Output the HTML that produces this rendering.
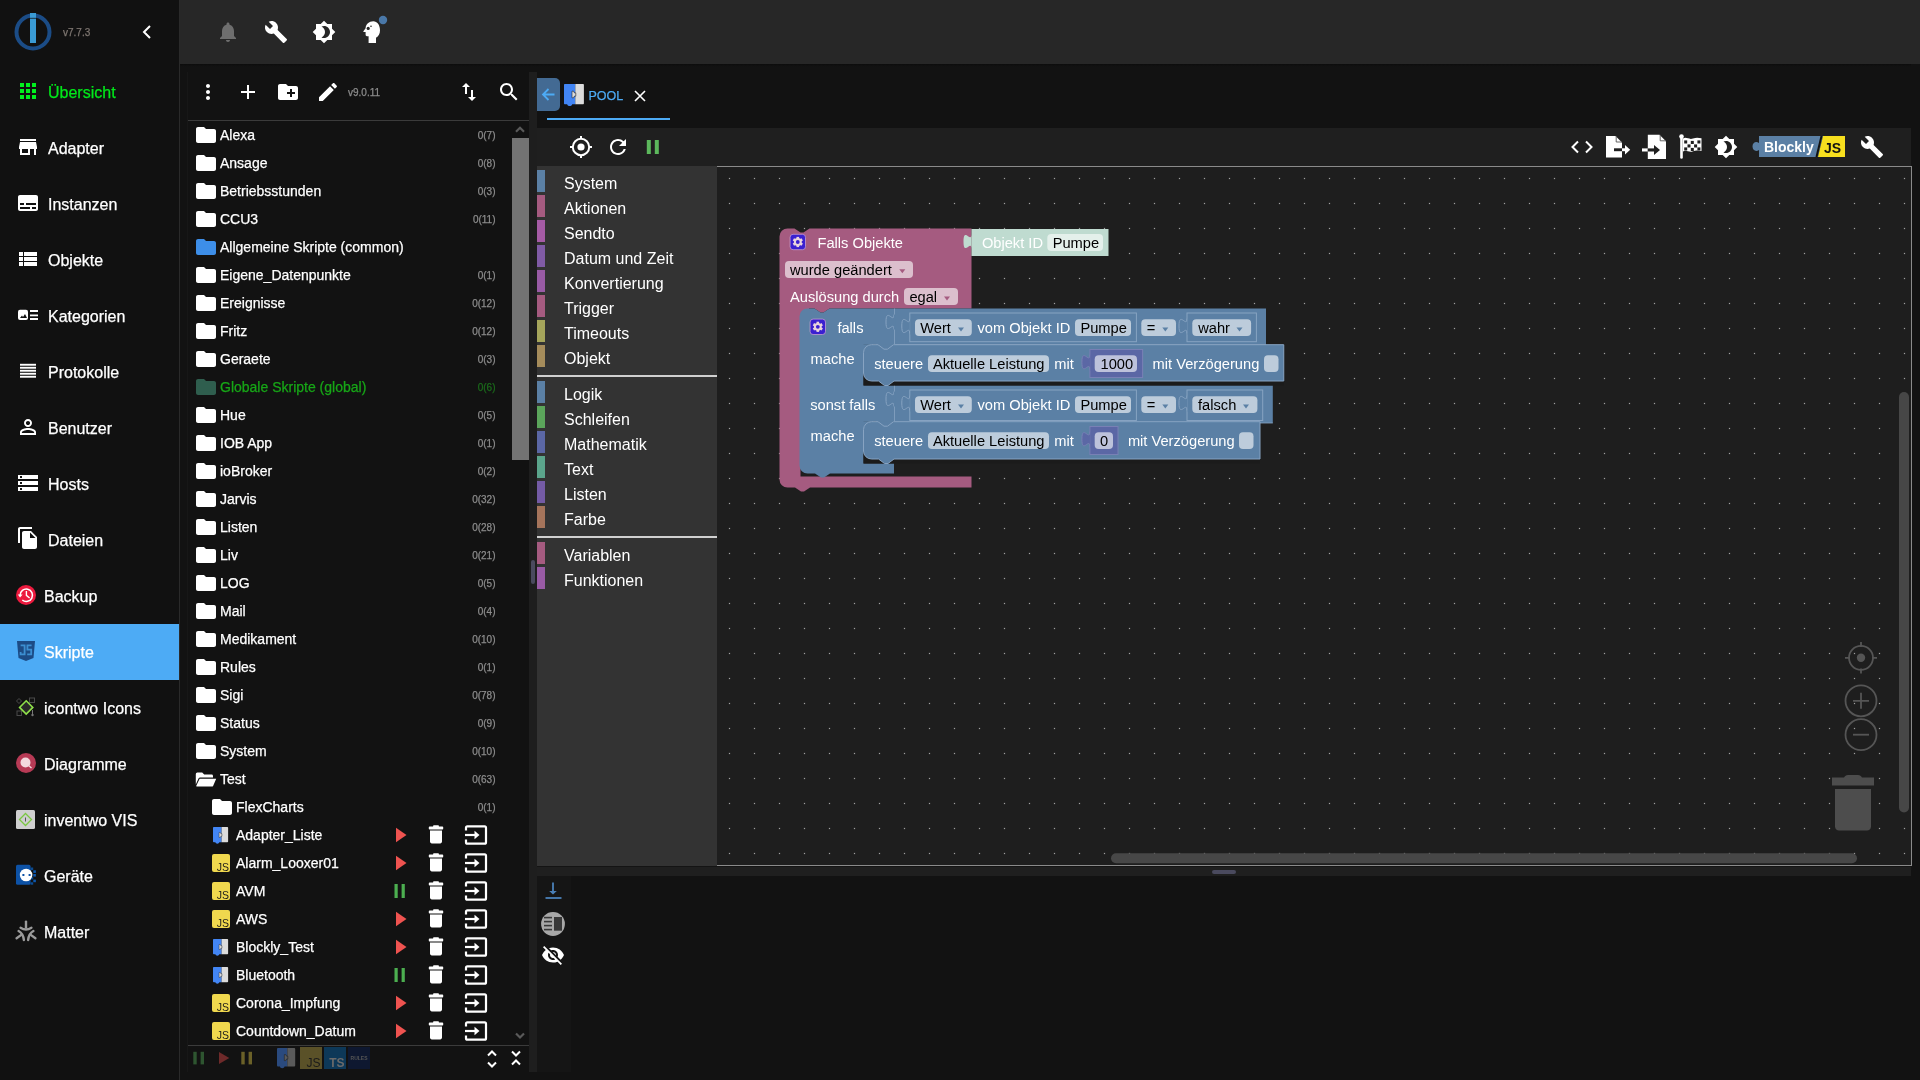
<!DOCTYPE html><html><head><meta charset="utf-8"><style>
html,body{margin:0;padding:0;width:1920px;height:1080px;overflow:hidden;background:#121212;font-family:"Liberation Sans",sans-serif;}
.t{position:absolute;white-space:nowrap;-webkit-text-stroke:0.25px currentColor;}
.r{position:absolute;display:block;}
#wrap{position:absolute;left:0;top:0;width:1920px;height:1080px;will-change:transform;}
</style></head><body>
<div id="wrap"><div class="r" style="left:0px;top:0px;width:180px;height:1080px;background:#111111;"></div>
<div class="r" style="left:179px;top:0px;width:1px;height:1080px;background:#2a2a2a;"></div>
<svg class="r" style="left:12px;top:11px;" width="42" height="42" viewBox="0 0 42 42"><circle cx="21" cy="21" r="16.5" fill="none" stroke="#1b4c86" stroke-width="4"/><rect x="18" y="2" width="6" height="4.8" fill="#3a9bd5"/><rect x="18" y="7.6" width="6" height="24.4" fill="#3a9bd5"/><rect x="18" y="32" width="6" height="0" fill="#3a9bd5"/></svg>
<div class="t" style="left:63px;top:27.64px;font-size:10px;line-height:10px;color:#7d7570;">v7.7.3</div>
<svg class="r" style="left:139px;top:24px;" width="16" height="16" viewBox="0 0 16 16"><path d="M11 2 L5 8 L11 14" fill="none" stroke="#fff" stroke-width="2"/></svg>
<div class="t" style="left:48px;top:84.76px;font-size:16px;line-height:16px;color:#00e81a;">Übersicht</div>
<div class="t" style="left:48px;top:140.76px;font-size:16px;line-height:16px;color:#fff;">Adapter</div>
<div class="t" style="left:48px;top:196.76px;font-size:16px;line-height:16px;color:#fff;">Instanzen</div>
<div class="t" style="left:48px;top:252.76px;font-size:16px;line-height:16px;color:#fff;">Objekte</div>
<div class="t" style="left:48px;top:308.76px;font-size:16px;line-height:16px;color:#fff;">Kategorien</div>
<div class="t" style="left:48px;top:364.76px;font-size:16px;line-height:16px;color:#fff;">Protokolle</div>
<div class="t" style="left:48px;top:420.76px;font-size:16px;line-height:16px;color:#fff;">Benutzer</div>
<div class="t" style="left:48px;top:476.76px;font-size:16px;line-height:16px;color:#fff;">Hosts</div>
<div class="t" style="left:48px;top:532.76px;font-size:16px;line-height:16px;color:#fff;">Dateien</div>
<div class="t" style="left:44px;top:588.76px;font-size:16px;line-height:16px;color:#fff;">Backup</div>
<div class="r" style="left:0px;top:624px;width:179px;height:56px;background:#4dabf5;"></div>
<div class="t" style="left:44px;top:644.76px;font-size:16px;line-height:16px;color:#fff;">Skripte</div>
<div class="t" style="left:44px;top:700.76px;font-size:16px;line-height:16px;color:#fff;">icontwo Icons</div>
<div class="t" style="left:44px;top:756.76px;font-size:16px;line-height:16px;color:#fff;">Diagramme</div>
<div class="t" style="left:44px;top:812.76px;font-size:16px;line-height:16px;color:#fff;">inventwo VIS</div>
<div class="t" style="left:44px;top:868.76px;font-size:16px;line-height:16px;color:#fff;">Geräte</div>
<div class="t" style="left:44px;top:924.76px;font-size:16px;line-height:16px;color:#fff;">Matter</div>
<svg class="r" style="left:16px;top:79px;" width="24" height="24" viewBox="0 0 24 24"><path fill="#00f01e" d="M4 8h4V4H4v4zm6 12h4v-4h-4v4zm-6 0h4v-4H4v4zm0-6h4v-4H4v4zm6 0h4v-4h-4v4zm6-10v4h4V4h-4zm-6 4h4V4h-4v4zm6 6h4v-4h-4v4zm0 6h4v-4h-4v4z"/></svg>
<svg class="r" style="left:16px;top:135px;" width="24" height="24" viewBox="0 0 24 24"><path fill="#fff" d="M20 4H4v2h16V4zm1 10v-2l-1-5H4l-1 5v2h1v6h10v-6h4v6h2v-6h1zm-9 4H6v-4h6v4z"/></svg>
<svg class="r" style="left:16px;top:191px;" width="24" height="24" viewBox="0 0 24 24"><path fill="#fff" d="M20 4H4c-1.1 0-2 .9-2 2v12c0 1.1.9 2 2 2h16c1.1 0 2-.9 2-2V6c0-1.1-.9-2-2-2zM4 12h4v2H4v-2zm10 6H4v-2h10v2zm6 0h-4v-2h4v2zm0-4H10v-2h10v2z"/></svg>
<svg class="r" style="left:16px;top:247px;" width="24" height="24" viewBox="0 0 24 24"><path fill="#fff" d="M3 14h4v-4H3v4zm0 5h4v-4H3v4zM3 9h4V5H3v4zm5 5h13v-4H8v4zm0 5h13v-4H8v4zM8 5v4h13V5H8z"/></svg>
<svg class="r" style="left:16px;top:303px;" width="24" height="24" viewBox="0 0 24 24"><rect x="2" y="6.8" width="10" height="10.2" rx="2" fill="#fff"/><path d="M4 15 L6 12.5 L7 14 L9 11 L11 15 Z" fill="#111"/><rect x="14" y="7" width="8" height="2" fill="#fff"/><rect x="14" y="11.5" width="8" height="1.8" fill="#fff"/><rect x="14" y="15" width="8" height="2" fill="#fff"/></svg>
<svg class="r" style="left:16px;top:359px;" width="24" height="24" viewBox="0 0 24 24"><rect x="4" y="4.8" width="16" height="1.9" fill="#fff"/><rect x="4" y="7.8" width="16" height="1.9" fill="#fff"/><rect x="4" y="10.8" width="16" height="1.9" fill="#fff"/><rect x="4" y="13.8" width="16" height="1.9" fill="#fff"/><rect x="4" y="16.8" width="16" height="1.9" fill="#fff"/></svg>
<svg class="r" style="left:16px;top:415px;" width="24" height="24" viewBox="0 0 24 24"><path fill="#fff" d="M12 5.9c1.16 0 2.1.94 2.1 2.1s-.94 2.1-2.1 2.1S9.9 9.16 9.9 8s.94-2.1 2.1-2.1m0 9c2.97 0 6.1 1.46 6.1 2.1v1.1H5.9V17c0-.64 3.13-2.1 6.1-2.1M12 4C9.79 4 8 5.79 8 8s1.79 4 4 4 4-1.79 4-4-1.79-4-4-4zm0 9c-2.67 0-8 1.34-8 4v3h16v-3c0-2.66-5.33-4-8-4z"/></svg>
<svg class="r" style="left:16px;top:471px;" width="24" height="24" viewBox="0 0 24 24"><path fill="#fff" d="M2 20h20v-4H2v4zm2-3h2v2H4v-2zM2 4v4h20V4H2zm4 3H4V5h2v2zm-4 7h20v-4H2v4zm2-3h2v2H4v-2z"/></svg>
<svg class="r" style="left:16px;top:526px;" width="24" height="24" viewBox="0 0 24 24"><path fill="#fff" d="M16 1H4c-1.1 0-2 .9-2 2v14h2V3h12V1zm-1 4l6 6v10c0 1.1-.9 2-2 2H7.99C6.89 23 6 22.1 6 21l.01-14c0-1.1.89-2 1.99-2h7zm-1 7h5.5L14 6.5V12z"/></svg>
<svg class="r" style="left:16px;top:585px;" width="20" height="20" viewBox="0 0 20 20"><circle cx="10" cy="10" r="10" fill="#ec1a3e"/><path d="M4.1 10.3 A6.2 6.2 0 1 1 6.3 15" fill="none" stroke="#fff" stroke-width="1.5"/><path d="M1.8 9.6 L4.1 12.4 L6.6 9.6 Z" fill="#fff"/><path d="M10.4 6 V10.4 L13.6 13" fill="none" stroke="#fff" stroke-width="1.4"/></svg>
<svg class="r" style="left:17px;top:641px;" width="18" height="20" viewBox="0 0 18 20"><path d="M0 0 H18 L16.5 17 L9 20 L1.5 17 Z" fill="#1c4b85"/><path d="M3.6 4.3 H7.6 V13.4 H3.6 V11" fill="none" stroke="#3c8fd2" stroke-width="1.8"/><path d="M14.6 4.3 H10.4 V8.6 H14.2 V13.4 H10.2" fill="none" stroke="#3c8fd2" stroke-width="1.8"/></svg>
<svg class="r" style="left:16px;top:697px;" width="20" height="20" viewBox="0 0 20 20"><g fill="none" stroke="#4a4a4a" stroke-width="1"><path d="M3 1.5 L5.5 4 L3 6.5 L0.5 4 Z"/><rect x="13.5" y="1" width="5" height="4.5"/><rect x="1" y="14" width="4.5" height="4.5"/></g><path d="M16.5 13 V18" stroke="#777" stroke-width="1"/><circle cx="16.5" cy="18" r="1.2" fill="#777"/><path d="M10.2 3.8 L16.8 10.4 L10.2 17 L3.6 10.4 Z" fill="#3a3a3a" fill-opacity="0.6" stroke="#8fe04a" stroke-width="1.6"/></svg>
<svg class="r" style="left:16px;top:753px;" width="20" height="20" viewBox="0 0 20 20"><circle cx="10" cy="10" r="10" fill="#b73a55"/><circle cx="9.5" cy="9.5" r="5" fill="#f3d9de"/><path d="M12 12 L15.5 15" stroke="#f3d9de" stroke-width="1.4"/></svg>
<svg class="r" style="left:16px;top:810px;" width="19" height="19" viewBox="0 0 19 19"><rect x="0" y="0" width="19" height="19" rx="1.5" fill="#cfcfcf"/><path d="M9.5 3.5 L15.5 9.5 L9.5 15.5 L3.5 9.5 Z" fill="none" stroke="#7bc742" stroke-width="1.3"/><rect x="9" y="7.5" width="1" height="4" fill="#555"/></svg>
<svg class="r" style="left:16px;top:864px;" width="21" height="22" viewBox="0 0 21 22"><rect x="0" y="0.8" width="14.6" height="20" rx="1.6" fill="#0d52a6"/><rect x="14.6" y="3.5" width="2.6" height="2.6" fill="#0b4a90"/><rect x="17.3" y="6.3" width="2.6" height="2.6" fill="#0c58b0"/><rect x="17.3" y="10" width="2.6" height="2.6" fill="#0c58b0"/><rect x="14.6" y="12.8" width="2.6" height="2.6" fill="#0b4a90"/><rect x="17.3" y="15.6" width="2.6" height="2.6" fill="#0c58b0"/><rect x="14.6" y="18.3" width="2.6" height="2.4" fill="#0b4a90"/><circle cx="10.1" cy="11" r="6.3" fill="#fff"/><rect x="6.4" y="10" width="2" height="2" fill="#0d52a6"/><rect x="12.6" y="10" width="2" height="2" fill="#0d52a6"/></svg>
<svg class="r" style="left:14px;top:919px;" width="24" height="24" viewBox="0 0 24 24"><g stroke="#9a9a9a" stroke-width="2.4" fill="none" stroke-linecap="round"><path d="M12 2.6 V8.4"/><path d="M6.6 8.7 Q12 12.2 17.4 8.7"/><path d="M4.6 12 Q9.2 14.5 9.9 21"/><path d="M2.6 19.2 L7.6 15.6"/><path d="M19.4 12 Q14.8 14.5 14.1 21"/><path d="M21.4 19.2 L16.4 15.6"/></g></svg>
<div class="r" style="left:180px;top:0px;width:1740px;height:64px;background:#272727;"></div>
<div class="r" style="left:180px;top:64px;width:1740px;height:3px;background:linear-gradient(#0c0c0c,#111 70%,#121212);"></div>
<svg class="r" style="left:216px;top:20px;" width="24" height="24" viewBox="0 0 24 24"><path fill="#6e6e6e" d="M12 22c1.1 0 2-.9 2-2h-4c0 1.1.89 2 2 2zm6-6v-5c0-3.07-1.64-5.64-4.5-6.32V4c0-.83-.67-1.5-1.5-1.5s-1.5.67-1.5 1.5v.68C7.63 5.36 6 7.92 6 11v5l-2 2v1h16v-1l-2-2z"/></svg>
<svg class="r" style="left:264px;top:20px;" width="24" height="24" viewBox="0 0 24 24"><path fill="#fff" d="M22.7 19l-9.1-9.1c.9-2.3.4-5-1.5-6.9-2-2-5-2.4-7.4-1.3L9 6 6 9 1.6 4.7C.4 7.1.9 10.1 2.9 12.1c1.9 1.9 4.6 2.4 6.9 1.5l9.1 9.1c.4.4 1 .4 1.4 0l2.3-2.3c.5-.4.5-1.1.1-1.4z"/></svg>
<svg class="r" style="left:312px;top:20px;" width="24" height="24" viewBox="0 0 24 24"><path fill="#fff" d="M20 8.69V4h-4.69L12 .69 8.69 4H4v4.69L.69 12 4 15.31V20h4.69L12 23.31 15.31 20H20v-4.69L23.31 12 20 8.69zM12 18c-.89 0-1.74-.2-2.5-.55C11.56 16.5 13 14.42 13 12s-1.44-4.5-3.5-5.45C10.26 6.2 11.11 6 12 6c3.31 0 6 2.69 6 6s-2.69 6-6 6z"/></svg>
<svg class="r" style="left:360px;top:20px;" width="24" height="24" viewBox="0 0 24 24"><path d="M13.3 1.2 C9 1.2 5.8 4.2 5.6 8.2 L3.4 11.2 C3.2 11.6 3.4 12 3.9 12 H5.6 V14.8 C5.6 15.6 6.2 16.2 7 16.2 H8.6 V23 H16 V17.8 C18.6 16.5 20 13.6 20 10.2 C20 5 17.2 1.2 13.3 1.2 Z" fill="#fff"/><circle cx="8.2" cy="8.4" r="1.6" fill="#272727"/><circle cx="11" cy="6.3" r="0.8" fill="#272727"/></svg>
<svg class="r" style="left:378px;top:15px;" width="10" height="10" viewBox="0 0 10 10"><circle cx="5" cy="5" r="4.2" fill="#4a78a8"/></svg>
<div class="r" style="left:187px;top:72px;width:1px;height:1000px;background:#171717;"></div>
<svg class="r" style="left:196px;top:80px;" width="24" height="24" viewBox="0 0 24 24"><path fill="#fff" d="M12 8c1.1 0 2-.9 2-2s-.9-2-2-2-2 .9-2 2 .9 2 2 2zm0 2c-1.1 0-2 .9-2 2s.9 2 2 2 2-.9 2-2-.9-2-2-2zm0 6c-1.1 0-2 .9-2 2s.9 2 2 2 2-.9 2-2-.9-2-2-2z"/></svg>
<svg class="r" style="left:236px;top:80px;" width="24" height="24" viewBox="0 0 24 24"><path fill="#fff" d="M19 13h-6v6h-2v-6H5v-2h6V5h2v6h6v2z"/></svg>
<svg class="r" style="left:276px;top:80px;" width="24" height="24" viewBox="0 0 24 24"><path fill="#fff" d="M20 6h-8l-2-2H4c-1.11 0-1.99.89-1.99 2L2 18c0 1.11.89 2 2 2h16c1.11 0 2-.89 2-2V8c0-1.11-.89-2-2-2zm-1 8h-3v3h-2v-3h-3v-2h3V9h2v3h3v2z"/></svg>
<svg class="r" style="left:316px;top:80px;" width="24" height="24" viewBox="0 0 24 24"><path fill="#fff" d="M3 17.25V21h3.75L17.81 9.94l-3.75-3.75L3 17.25zM20.71 7.04c.39-.39.39-1.02 0-1.41l-2.34-2.34c-.39-.39-1.02-.39-1.41 0l-1.83 1.83 3.75 3.75 1.83-1.83z"/></svg>
<div class="t" style="left:348px;top:87.63px;font-size:10px;line-height:10px;color:#8c8c8c;">v9.0.11</div>
<svg class="r" style="left:457px;top:80px;" width="24" height="24" viewBox="0 0 24 24"><path fill="#fff" d="M16 17.01V10h-2v7.01h-3L15 21l4-3.99h-3zM9 3L5 6.99h3V14h2V6.99h3L9 3z"/></svg>
<svg class="r" style="left:497px;top:80px;" width="24" height="24" viewBox="0 0 24 24"><path fill="#fff" d="M15.5 14h-.79l-.28-.27C15.41 12.59 16 11.11 16 9.5 16 5.91 13.09 3 9.5 3S3 5.91 3 9.5 5.91 16 9.5 16c1.61 0 3.09-.59 4.23-1.57l.27.28v.79l5 4.99L20.49 19l-4.99-5zm-6 0C7.01 14 5 11.99 5 9.5S7.01 5 9.5 5 14 7.01 14 9.5 11.99 14 9.5 14z"/></svg>
<div class="r" style="left:188px;top:120px;width:341px;height:1px;background:#3b3b3b;"></div>
<svg class="r" style="left:194px;top:123px;" width="24" height="24" viewBox="0 0 24 24"><path fill="#fff" d="M10 4H4c-1.1 0-1.99.9-1.99 2L2 18c0 1.1.9 2 2 2h16c1.1 0 2-.9 2-2V8c0-1.1-.9-2-2-2h-8l-2-2z"/></svg>
<div class="t" style="left:220px;top:128.25px;font-size:14px;line-height:14px;color:#fff;">Alexa</div>
<div class="t" style="right:1424.5px;top:130.63px;font-size:10px;line-height:10px;color:#8c8c8c;">0(7)</div>
<svg class="r" style="left:194px;top:151px;" width="24" height="24" viewBox="0 0 24 24"><path fill="#fff" d="M10 4H4c-1.1 0-1.99.9-1.99 2L2 18c0 1.1.9 2 2 2h16c1.1 0 2-.9 2-2V8c0-1.1-.9-2-2-2h-8l-2-2z"/></svg>
<div class="t" style="left:220px;top:156.25px;font-size:14px;line-height:14px;color:#fff;">Ansage</div>
<div class="t" style="right:1424.5px;top:158.63px;font-size:10px;line-height:10px;color:#8c8c8c;">0(8)</div>
<svg class="r" style="left:194px;top:179px;" width="24" height="24" viewBox="0 0 24 24"><path fill="#fff" d="M10 4H4c-1.1 0-1.99.9-1.99 2L2 18c0 1.1.9 2 2 2h16c1.1 0 2-.9 2-2V8c0-1.1-.9-2-2-2h-8l-2-2z"/></svg>
<div class="t" style="left:220px;top:184.25px;font-size:14px;line-height:14px;color:#fff;">Betriebsstunden</div>
<div class="t" style="right:1424.5px;top:186.63px;font-size:10px;line-height:10px;color:#8c8c8c;">0(3)</div>
<svg class="r" style="left:194px;top:207px;" width="24" height="24" viewBox="0 0 24 24"><path fill="#fff" d="M10 4H4c-1.1 0-1.99.9-1.99 2L2 18c0 1.1.9 2 2 2h16c1.1 0 2-.9 2-2V8c0-1.1-.9-2-2-2h-8l-2-2z"/></svg>
<div class="t" style="left:220px;top:212.25px;font-size:14px;line-height:14px;color:#fff;">CCU3</div>
<div class="t" style="right:1424.5px;top:214.63px;font-size:10px;line-height:10px;color:#8c8c8c;">0(11)</div>
<svg class="r" style="left:194px;top:235px;" width="24" height="24" viewBox="0 0 24 24"><path fill="#3d8ee8" d="M10 4H4c-1.1 0-1.99.9-1.99 2L2 18c0 1.1.9 2 2 2h16c1.1 0 2-.9 2-2V8c0-1.1-.9-2-2-2h-8l-2-2z"/></svg>
<div class="t" style="left:220px;top:240.25px;font-size:14px;line-height:14px;color:#fff;">Allgemeine Skripte (common)</div>
<svg class="r" style="left:194px;top:263px;" width="24" height="24" viewBox="0 0 24 24"><path fill="#fff" d="M10 4H4c-1.1 0-1.99.9-1.99 2L2 18c0 1.1.9 2 2 2h16c1.1 0 2-.9 2-2V8c0-1.1-.9-2-2-2h-8l-2-2z"/></svg>
<div class="t" style="left:220px;top:268.25px;font-size:14px;line-height:14px;color:#fff;">Eigene_Datenpunkte</div>
<div class="t" style="right:1424.5px;top:270.64px;font-size:10px;line-height:10px;color:#8c8c8c;">0(1)</div>
<svg class="r" style="left:194px;top:291px;" width="24" height="24" viewBox="0 0 24 24"><path fill="#fff" d="M10 4H4c-1.1 0-1.99.9-1.99 2L2 18c0 1.1.9 2 2 2h16c1.1 0 2-.9 2-2V8c0-1.1-.9-2-2-2h-8l-2-2z"/></svg>
<div class="t" style="left:220px;top:296.25px;font-size:14px;line-height:14px;color:#fff;">Ereignisse</div>
<div class="t" style="right:1424.5px;top:298.64px;font-size:10px;line-height:10px;color:#8c8c8c;">0(12)</div>
<svg class="r" style="left:194px;top:319px;" width="24" height="24" viewBox="0 0 24 24"><path fill="#fff" d="M10 4H4c-1.1 0-1.99.9-1.99 2L2 18c0 1.1.9 2 2 2h16c1.1 0 2-.9 2-2V8c0-1.1-.9-2-2-2h-8l-2-2z"/></svg>
<div class="t" style="left:220px;top:324.25px;font-size:14px;line-height:14px;color:#fff;">Fritz</div>
<div class="t" style="right:1424.5px;top:326.64px;font-size:10px;line-height:10px;color:#8c8c8c;">0(12)</div>
<svg class="r" style="left:194px;top:347px;" width="24" height="24" viewBox="0 0 24 24"><path fill="#fff" d="M10 4H4c-1.1 0-1.99.9-1.99 2L2 18c0 1.1.9 2 2 2h16c1.1 0 2-.9 2-2V8c0-1.1-.9-2-2-2h-8l-2-2z"/></svg>
<div class="t" style="left:220px;top:352.25px;font-size:14px;line-height:14px;color:#fff;">Geraete</div>
<div class="t" style="right:1424.5px;top:354.64px;font-size:10px;line-height:10px;color:#8c8c8c;">0(3)</div>
<svg class="r" style="left:194px;top:375px;" width="24" height="24" viewBox="0 0 24 24"><path fill="#2f5e4e" d="M10 4H4c-1.1 0-1.99.9-1.99 2L2 18c0 1.1.9 2 2 2h16c1.1 0 2-.9 2-2V8c0-1.1-.9-2-2-2h-8l-2-2z"/></svg>
<div class="t" style="left:220px;top:380.25px;font-size:14px;line-height:14px;color:#17a617;">Globale Skripte (global)</div>
<div class="t" style="right:1424.5px;top:382.64px;font-size:10px;line-height:10px;color:#1b6a1b;">0(6)</div>
<svg class="r" style="left:194px;top:403px;" width="24" height="24" viewBox="0 0 24 24"><path fill="#fff" d="M10 4H4c-1.1 0-1.99.9-1.99 2L2 18c0 1.1.9 2 2 2h16c1.1 0 2-.9 2-2V8c0-1.1-.9-2-2-2h-8l-2-2z"/></svg>
<div class="t" style="left:220px;top:408.25px;font-size:14px;line-height:14px;color:#fff;">Hue</div>
<div class="t" style="right:1424.5px;top:410.64px;font-size:10px;line-height:10px;color:#8c8c8c;">0(5)</div>
<svg class="r" style="left:194px;top:431px;" width="24" height="24" viewBox="0 0 24 24"><path fill="#fff" d="M10 4H4c-1.1 0-1.99.9-1.99 2L2 18c0 1.1.9 2 2 2h16c1.1 0 2-.9 2-2V8c0-1.1-.9-2-2-2h-8l-2-2z"/></svg>
<div class="t" style="left:220px;top:436.25px;font-size:14px;line-height:14px;color:#fff;">IOB App</div>
<div class="t" style="right:1424.5px;top:438.64px;font-size:10px;line-height:10px;color:#8c8c8c;">0(1)</div>
<svg class="r" style="left:194px;top:459px;" width="24" height="24" viewBox="0 0 24 24"><path fill="#fff" d="M10 4H4c-1.1 0-1.99.9-1.99 2L2 18c0 1.1.9 2 2 2h16c1.1 0 2-.9 2-2V8c0-1.1-.9-2-2-2h-8l-2-2z"/></svg>
<div class="t" style="left:220px;top:464.25px;font-size:14px;line-height:14px;color:#fff;">ioBroker</div>
<div class="t" style="right:1424.5px;top:466.64px;font-size:10px;line-height:10px;color:#8c8c8c;">0(2)</div>
<svg class="r" style="left:194px;top:487px;" width="24" height="24" viewBox="0 0 24 24"><path fill="#fff" d="M10 4H4c-1.1 0-1.99.9-1.99 2L2 18c0 1.1.9 2 2 2h16c1.1 0 2-.9 2-2V8c0-1.1-.9-2-2-2h-8l-2-2z"/></svg>
<div class="t" style="left:220px;top:492.25px;font-size:14px;line-height:14px;color:#fff;">Jarvis</div>
<div class="t" style="right:1424.5px;top:494.64px;font-size:10px;line-height:10px;color:#8c8c8c;">0(32)</div>
<svg class="r" style="left:194px;top:515px;" width="24" height="24" viewBox="0 0 24 24"><path fill="#fff" d="M10 4H4c-1.1 0-1.99.9-1.99 2L2 18c0 1.1.9 2 2 2h16c1.1 0 2-.9 2-2V8c0-1.1-.9-2-2-2h-8l-2-2z"/></svg>
<div class="t" style="left:220px;top:520.25px;font-size:14px;line-height:14px;color:#fff;">Listen</div>
<div class="t" style="right:1424.5px;top:522.63px;font-size:10px;line-height:10px;color:#8c8c8c;">0(28)</div>
<svg class="r" style="left:194px;top:543px;" width="24" height="24" viewBox="0 0 24 24"><path fill="#fff" d="M10 4H4c-1.1 0-1.99.9-1.99 2L2 18c0 1.1.9 2 2 2h16c1.1 0 2-.9 2-2V8c0-1.1-.9-2-2-2h-8l-2-2z"/></svg>
<div class="t" style="left:220px;top:548.25px;font-size:14px;line-height:14px;color:#fff;">Liv</div>
<div class="t" style="right:1424.5px;top:550.63px;font-size:10px;line-height:10px;color:#8c8c8c;">0(21)</div>
<svg class="r" style="left:194px;top:571px;" width="24" height="24" viewBox="0 0 24 24"><path fill="#fff" d="M10 4H4c-1.1 0-1.99.9-1.99 2L2 18c0 1.1.9 2 2 2h16c1.1 0 2-.9 2-2V8c0-1.1-.9-2-2-2h-8l-2-2z"/></svg>
<div class="t" style="left:220px;top:576.25px;font-size:14px;line-height:14px;color:#fff;">LOG</div>
<div class="t" style="right:1424.5px;top:578.63px;font-size:10px;line-height:10px;color:#8c8c8c;">0(5)</div>
<svg class="r" style="left:194px;top:599px;" width="24" height="24" viewBox="0 0 24 24"><path fill="#fff" d="M10 4H4c-1.1 0-1.99.9-1.99 2L2 18c0 1.1.9 2 2 2h16c1.1 0 2-.9 2-2V8c0-1.1-.9-2-2-2h-8l-2-2z"/></svg>
<div class="t" style="left:220px;top:604.25px;font-size:14px;line-height:14px;color:#fff;">Mail</div>
<div class="t" style="right:1424.5px;top:606.63px;font-size:10px;line-height:10px;color:#8c8c8c;">0(4)</div>
<svg class="r" style="left:194px;top:627px;" width="24" height="24" viewBox="0 0 24 24"><path fill="#fff" d="M10 4H4c-1.1 0-1.99.9-1.99 2L2 18c0 1.1.9 2 2 2h16c1.1 0 2-.9 2-2V8c0-1.1-.9-2-2-2h-8l-2-2z"/></svg>
<div class="t" style="left:220px;top:632.25px;font-size:14px;line-height:14px;color:#fff;">Medikament</div>
<div class="t" style="right:1424.5px;top:634.63px;font-size:10px;line-height:10px;color:#8c8c8c;">0(10)</div>
<svg class="r" style="left:194px;top:655px;" width="24" height="24" viewBox="0 0 24 24"><path fill="#fff" d="M10 4H4c-1.1 0-1.99.9-1.99 2L2 18c0 1.1.9 2 2 2h16c1.1 0 2-.9 2-2V8c0-1.1-.9-2-2-2h-8l-2-2z"/></svg>
<div class="t" style="left:220px;top:660.25px;font-size:14px;line-height:14px;color:#fff;">Rules</div>
<div class="t" style="right:1424.5px;top:662.63px;font-size:10px;line-height:10px;color:#8c8c8c;">0(1)</div>
<svg class="r" style="left:194px;top:683px;" width="24" height="24" viewBox="0 0 24 24"><path fill="#fff" d="M10 4H4c-1.1 0-1.99.9-1.99 2L2 18c0 1.1.9 2 2 2h16c1.1 0 2-.9 2-2V8c0-1.1-.9-2-2-2h-8l-2-2z"/></svg>
<div class="t" style="left:220px;top:688.25px;font-size:14px;line-height:14px;color:#fff;">Sigi</div>
<div class="t" style="right:1424.5px;top:690.63px;font-size:10px;line-height:10px;color:#8c8c8c;">0(78)</div>
<svg class="r" style="left:194px;top:711px;" width="24" height="24" viewBox="0 0 24 24"><path fill="#fff" d="M10 4H4c-1.1 0-1.99.9-1.99 2L2 18c0 1.1.9 2 2 2h16c1.1 0 2-.9 2-2V8c0-1.1-.9-2-2-2h-8l-2-2z"/></svg>
<div class="t" style="left:220px;top:716.25px;font-size:14px;line-height:14px;color:#fff;">Status</div>
<div class="t" style="right:1424.5px;top:718.63px;font-size:10px;line-height:10px;color:#8c8c8c;">0(9)</div>
<svg class="r" style="left:194px;top:739px;" width="24" height="24" viewBox="0 0 24 24"><path fill="#fff" d="M10 4H4c-1.1 0-1.99.9-1.99 2L2 18c0 1.1.9 2 2 2h16c1.1 0 2-.9 2-2V8c0-1.1-.9-2-2-2h-8l-2-2z"/></svg>
<div class="t" style="left:220px;top:744.25px;font-size:14px;line-height:14px;color:#fff;">System</div>
<div class="t" style="right:1424.5px;top:746.63px;font-size:10px;line-height:10px;color:#8c8c8c;">0(10)</div>
<svg class="r" style="left:195px;top:771.5px;" width="22" height="16" viewBox="0 0 22 16"><path d="M0.8 2 Q0.8 0.5 2.3 0.5 H7.2 L9.2 2.6 H16.6 Q18 2.6 18 4 V5.6 H5.2 Q4 5.6 3.5 6.6 L0.8 12.5 Z" fill="#fff"/><path d="M4.6 6.8 H21.2 L18.1 13.9 Q17.7 14.6 16.8 14.6 H1.8 Q0.9 14.6 1.3 13.8 Z" fill="#fff"/></svg>
<div class="t" style="left:220px;top:772.25px;font-size:14px;line-height:14px;color:#fff;">Test</div>
<div class="t" style="right:1424.5px;top:774.63px;font-size:10px;line-height:10px;color:#8c8c8c;">0(63)</div>
<svg class="r" style="left:210px;top:795px;" width="24" height="24" viewBox="0 0 24 24"><path fill="#fff" d="M10 4H4c-1.1 0-1.99.9-1.99 2L2 18c0 1.1.9 2 2 2h16c1.1 0 2-.9 2-2V8c0-1.1-.9-2-2-2h-8l-2-2z"/></svg>
<div class="t" style="left:236px;top:800.25px;font-size:14px;line-height:14px;color:#fff;">FlexCharts</div>
<div class="t" style="right:1424.5px;top:802.63px;font-size:10px;line-height:10px;color:#8c8c8c;">0(1)</div>
<svg class="r" style="left:212.9px;top:826.9px;" width="17" height="18" viewBox="0 0 17 18"><g transform="scale(0.76)"><path d="M1 0 H11.3 V20.2 H8.2 C8.2 22.6 3.2 22.6 3.2 20.2 H1 C0.4 20.2 0 19.8 0 19.2 V1 C0 0.4 0.4 0 1 0 Z" fill="#4285f4"/><path d="M11.3 0 H18.9 C19.5 0 19.9 0.4 19.9 1 V19.2 C19.9 19.8 19.5 20.2 18.9 20.2 H11.3 Z" fill="#dcdcdc"/><path d="M11.8 8.9 H10.4 L9.6 7.2 H8 V13.8 H9.6 L10.4 12.1 H11.8 Z" fill="#dcdcdc" stroke="#1a1a1a" stroke-width="0.55"/></g></svg>
<div class="t" style="left:236px;top:828.25px;font-size:14px;line-height:14px;color:#fff;">Adapter_Liste</div>
<svg class="r" style="left:395px;top:827px;" width="12" height="16" viewBox="0 0 12 16"><path d="M1 0.8 L11.5 8 L1 15.2 Z" fill="#ef5350"/></svg>
<svg class="r" style="left:428px;top:825px;" width="16" height="20" viewBox="0 0 16 20"><rect x="0.8" y="1.6" width="14.4" height="3" rx="0.8" fill="#fff"/><rect x="5" y="0.3" width="6" height="2" rx="1" fill="#fff"/><path d="M2 5.5 H14 V16.5 C14 17.6 13.2 18.4 12.2 18.4 H3.8 C2.8 18.4 2 17.6 2 16.5 Z" fill="#fff"/></svg>
<svg class="r" style="left:464px;top:825px;" width="24" height="20" viewBox="0 0 24 20"><path d="M2 5.5 V2.8 C2 2 2.6 1.3 3.4 1.3 H20.6 C21.4 1.3 22 2 22 2.8 V17.2 C22 18 21.4 18.7 20.6 18.7 H3.4 C2.6 18.7 2 18 2 17.2 V14.5" fill="none" stroke="#fff" stroke-width="2.2"/><path d="M1 10 H13" stroke="#fff" stroke-width="2.2"/><path d="M10.5 5.8 L15.5 10 L10.5 14.2 Z" fill="#fff"/></svg>
<svg class="r" style="left:212px;top:854px;" width="18" height="18" viewBox="0 0 18 18"><rect x="0" y="0" width="18" height="18" rx="2" fill="#f0d84e"/><text x="17" y="16.5" text-anchor="end" font-family="Liberation Sans" font-size="10.5" fill="#1a1a1a">JS</text></svg>
<div class="t" style="left:236px;top:856.25px;font-size:14px;line-height:14px;color:#fff;">Alarm_Looxer01</div>
<svg class="r" style="left:395px;top:855px;" width="12" height="16" viewBox="0 0 12 16"><path d="M1 0.8 L11.5 8 L1 15.2 Z" fill="#ef5350"/></svg>
<svg class="r" style="left:428px;top:853px;" width="16" height="20" viewBox="0 0 16 20"><rect x="0.8" y="1.6" width="14.4" height="3" rx="0.8" fill="#fff"/><rect x="5" y="0.3" width="6" height="2" rx="1" fill="#fff"/><path d="M2 5.5 H14 V16.5 C14 17.6 13.2 18.4 12.2 18.4 H3.8 C2.8 18.4 2 17.6 2 16.5 Z" fill="#fff"/></svg>
<svg class="r" style="left:464px;top:853px;" width="24" height="20" viewBox="0 0 24 20"><path d="M2 5.5 V2.8 C2 2 2.6 1.3 3.4 1.3 H20.6 C21.4 1.3 22 2 22 2.8 V17.2 C22 18 21.4 18.7 20.6 18.7 H3.4 C2.6 18.7 2 18 2 17.2 V14.5" fill="none" stroke="#fff" stroke-width="2.2"/><path d="M1 10 H13" stroke="#fff" stroke-width="2.2"/><path d="M10.5 5.8 L15.5 10 L10.5 14.2 Z" fill="#fff"/></svg>
<svg class="r" style="left:212px;top:882px;" width="18" height="18" viewBox="0 0 18 18"><rect x="0" y="0" width="18" height="18" rx="2" fill="#f0d84e"/><text x="17" y="16.5" text-anchor="end" font-family="Liberation Sans" font-size="10.5" fill="#1a1a1a">JS</text></svg>
<div class="t" style="left:236px;top:884.25px;font-size:14px;line-height:14px;color:#fff;">AVM</div>
<svg class="r" style="left:393px;top:883px;" width="14" height="16" viewBox="0 0 14 16"><rect x="1.5" y="1" width="3.2" height="14" fill="#4caf50"/><rect x="8.6" y="1" width="3.2" height="14" fill="#4caf50"/></svg>
<svg class="r" style="left:428px;top:881px;" width="16" height="20" viewBox="0 0 16 20"><rect x="0.8" y="1.6" width="14.4" height="3" rx="0.8" fill="#fff"/><rect x="5" y="0.3" width="6" height="2" rx="1" fill="#fff"/><path d="M2 5.5 H14 V16.5 C14 17.6 13.2 18.4 12.2 18.4 H3.8 C2.8 18.4 2 17.6 2 16.5 Z" fill="#fff"/></svg>
<svg class="r" style="left:464px;top:881px;" width="24" height="20" viewBox="0 0 24 20"><path d="M2 5.5 V2.8 C2 2 2.6 1.3 3.4 1.3 H20.6 C21.4 1.3 22 2 22 2.8 V17.2 C22 18 21.4 18.7 20.6 18.7 H3.4 C2.6 18.7 2 18 2 17.2 V14.5" fill="none" stroke="#fff" stroke-width="2.2"/><path d="M1 10 H13" stroke="#fff" stroke-width="2.2"/><path d="M10.5 5.8 L15.5 10 L10.5 14.2 Z" fill="#fff"/></svg>
<svg class="r" style="left:212px;top:910px;" width="18" height="18" viewBox="0 0 18 18"><rect x="0" y="0" width="18" height="18" rx="2" fill="#f0d84e"/><text x="17" y="16.5" text-anchor="end" font-family="Liberation Sans" font-size="10.5" fill="#1a1a1a">JS</text></svg>
<div class="t" style="left:236px;top:912.25px;font-size:14px;line-height:14px;color:#fff;">AWS</div>
<svg class="r" style="left:395px;top:911px;" width="12" height="16" viewBox="0 0 12 16"><path d="M1 0.8 L11.5 8 L1 15.2 Z" fill="#ef5350"/></svg>
<svg class="r" style="left:428px;top:909px;" width="16" height="20" viewBox="0 0 16 20"><rect x="0.8" y="1.6" width="14.4" height="3" rx="0.8" fill="#fff"/><rect x="5" y="0.3" width="6" height="2" rx="1" fill="#fff"/><path d="M2 5.5 H14 V16.5 C14 17.6 13.2 18.4 12.2 18.4 H3.8 C2.8 18.4 2 17.6 2 16.5 Z" fill="#fff"/></svg>
<svg class="r" style="left:464px;top:909px;" width="24" height="20" viewBox="0 0 24 20"><path d="M2 5.5 V2.8 C2 2 2.6 1.3 3.4 1.3 H20.6 C21.4 1.3 22 2 22 2.8 V17.2 C22 18 21.4 18.7 20.6 18.7 H3.4 C2.6 18.7 2 18 2 17.2 V14.5" fill="none" stroke="#fff" stroke-width="2.2"/><path d="M1 10 H13" stroke="#fff" stroke-width="2.2"/><path d="M10.5 5.8 L15.5 10 L10.5 14.2 Z" fill="#fff"/></svg>
<svg class="r" style="left:212.9px;top:938.9px;" width="17" height="18" viewBox="0 0 17 18"><g transform="scale(0.76)"><path d="M1 0 H11.3 V20.2 H8.2 C8.2 22.6 3.2 22.6 3.2 20.2 H1 C0.4 20.2 0 19.8 0 19.2 V1 C0 0.4 0.4 0 1 0 Z" fill="#4285f4"/><path d="M11.3 0 H18.9 C19.5 0 19.9 0.4 19.9 1 V19.2 C19.9 19.8 19.5 20.2 18.9 20.2 H11.3 Z" fill="#dcdcdc"/><path d="M11.8 8.9 H10.4 L9.6 7.2 H8 V13.8 H9.6 L10.4 12.1 H11.8 Z" fill="#dcdcdc" stroke="#1a1a1a" stroke-width="0.55"/></g></svg>
<div class="t" style="left:236px;top:940.25px;font-size:14px;line-height:14px;color:#fff;">Blockly_Test</div>
<svg class="r" style="left:395px;top:939px;" width="12" height="16" viewBox="0 0 12 16"><path d="M1 0.8 L11.5 8 L1 15.2 Z" fill="#ef5350"/></svg>
<svg class="r" style="left:428px;top:937px;" width="16" height="20" viewBox="0 0 16 20"><rect x="0.8" y="1.6" width="14.4" height="3" rx="0.8" fill="#fff"/><rect x="5" y="0.3" width="6" height="2" rx="1" fill="#fff"/><path d="M2 5.5 H14 V16.5 C14 17.6 13.2 18.4 12.2 18.4 H3.8 C2.8 18.4 2 17.6 2 16.5 Z" fill="#fff"/></svg>
<svg class="r" style="left:464px;top:937px;" width="24" height="20" viewBox="0 0 24 20"><path d="M2 5.5 V2.8 C2 2 2.6 1.3 3.4 1.3 H20.6 C21.4 1.3 22 2 22 2.8 V17.2 C22 18 21.4 18.7 20.6 18.7 H3.4 C2.6 18.7 2 18 2 17.2 V14.5" fill="none" stroke="#fff" stroke-width="2.2"/><path d="M1 10 H13" stroke="#fff" stroke-width="2.2"/><path d="M10.5 5.8 L15.5 10 L10.5 14.2 Z" fill="#fff"/></svg>
<svg class="r" style="left:212.9px;top:966.9px;" width="17" height="18" viewBox="0 0 17 18"><g transform="scale(0.76)"><path d="M1 0 H11.3 V20.2 H8.2 C8.2 22.6 3.2 22.6 3.2 20.2 H1 C0.4 20.2 0 19.8 0 19.2 V1 C0 0.4 0.4 0 1 0 Z" fill="#4285f4"/><path d="M11.3 0 H18.9 C19.5 0 19.9 0.4 19.9 1 V19.2 C19.9 19.8 19.5 20.2 18.9 20.2 H11.3 Z" fill="#dcdcdc"/><path d="M11.8 8.9 H10.4 L9.6 7.2 H8 V13.8 H9.6 L10.4 12.1 H11.8 Z" fill="#dcdcdc" stroke="#1a1a1a" stroke-width="0.55"/></g></svg>
<div class="t" style="left:236px;top:968.25px;font-size:14px;line-height:14px;color:#fff;">Bluetooth</div>
<svg class="r" style="left:393px;top:967px;" width="14" height="16" viewBox="0 0 14 16"><rect x="1.5" y="1" width="3.2" height="14" fill="#4caf50"/><rect x="8.6" y="1" width="3.2" height="14" fill="#4caf50"/></svg>
<svg class="r" style="left:428px;top:965px;" width="16" height="20" viewBox="0 0 16 20"><rect x="0.8" y="1.6" width="14.4" height="3" rx="0.8" fill="#fff"/><rect x="5" y="0.3" width="6" height="2" rx="1" fill="#fff"/><path d="M2 5.5 H14 V16.5 C14 17.6 13.2 18.4 12.2 18.4 H3.8 C2.8 18.4 2 17.6 2 16.5 Z" fill="#fff"/></svg>
<svg class="r" style="left:464px;top:965px;" width="24" height="20" viewBox="0 0 24 20"><path d="M2 5.5 V2.8 C2 2 2.6 1.3 3.4 1.3 H20.6 C21.4 1.3 22 2 22 2.8 V17.2 C22 18 21.4 18.7 20.6 18.7 H3.4 C2.6 18.7 2 18 2 17.2 V14.5" fill="none" stroke="#fff" stroke-width="2.2"/><path d="M1 10 H13" stroke="#fff" stroke-width="2.2"/><path d="M10.5 5.8 L15.5 10 L10.5 14.2 Z" fill="#fff"/></svg>
<svg class="r" style="left:212px;top:994px;" width="18" height="18" viewBox="0 0 18 18"><rect x="0" y="0" width="18" height="18" rx="2" fill="#f0d84e"/><text x="17" y="16.5" text-anchor="end" font-family="Liberation Sans" font-size="10.5" fill="#1a1a1a">JS</text></svg>
<div class="t" style="left:236px;top:996.25px;font-size:14px;line-height:14px;color:#fff;">Corona_Impfung</div>
<svg class="r" style="left:395px;top:995px;" width="12" height="16" viewBox="0 0 12 16"><path d="M1 0.8 L11.5 8 L1 15.2 Z" fill="#ef5350"/></svg>
<svg class="r" style="left:428px;top:993px;" width="16" height="20" viewBox="0 0 16 20"><rect x="0.8" y="1.6" width="14.4" height="3" rx="0.8" fill="#fff"/><rect x="5" y="0.3" width="6" height="2" rx="1" fill="#fff"/><path d="M2 5.5 H14 V16.5 C14 17.6 13.2 18.4 12.2 18.4 H3.8 C2.8 18.4 2 17.6 2 16.5 Z" fill="#fff"/></svg>
<svg class="r" style="left:464px;top:993px;" width="24" height="20" viewBox="0 0 24 20"><path d="M2 5.5 V2.8 C2 2 2.6 1.3 3.4 1.3 H20.6 C21.4 1.3 22 2 22 2.8 V17.2 C22 18 21.4 18.7 20.6 18.7 H3.4 C2.6 18.7 2 18 2 17.2 V14.5" fill="none" stroke="#fff" stroke-width="2.2"/><path d="M1 10 H13" stroke="#fff" stroke-width="2.2"/><path d="M10.5 5.8 L15.5 10 L10.5 14.2 Z" fill="#fff"/></svg>
<svg class="r" style="left:212px;top:1022px;" width="18" height="18" viewBox="0 0 18 18"><rect x="0" y="0" width="18" height="18" rx="2" fill="#f0d84e"/><text x="17" y="16.5" text-anchor="end" font-family="Liberation Sans" font-size="10.5" fill="#1a1a1a">JS</text></svg>
<div class="t" style="left:236px;top:1024.25px;font-size:14px;line-height:14px;color:#fff;">Countdown_Datum</div>
<svg class="r" style="left:395px;top:1023px;" width="12" height="16" viewBox="0 0 12 16"><path d="M1 0.8 L11.5 8 L1 15.2 Z" fill="#ef5350"/></svg>
<svg class="r" style="left:428px;top:1021px;" width="16" height="20" viewBox="0 0 16 20"><rect x="0.8" y="1.6" width="14.4" height="3" rx="0.8" fill="#fff"/><rect x="5" y="0.3" width="6" height="2" rx="1" fill="#fff"/><path d="M2 5.5 H14 V16.5 C14 17.6 13.2 18.4 12.2 18.4 H3.8 C2.8 18.4 2 17.6 2 16.5 Z" fill="#fff"/></svg>
<svg class="r" style="left:464px;top:1021px;" width="24" height="20" viewBox="0 0 24 20"><path d="M2 5.5 V2.8 C2 2 2.6 1.3 3.4 1.3 H20.6 C21.4 1.3 22 2 22 2.8 V17.2 C22 18 21.4 18.7 20.6 18.7 H3.4 C2.6 18.7 2 18 2 17.2 V14.5" fill="none" stroke="#fff" stroke-width="2.2"/><path d="M1 10 H13" stroke="#fff" stroke-width="2.2"/><path d="M10.5 5.8 L15.5 10 L10.5 14.2 Z" fill="#fff"/></svg>
<svg class="r" style="left:514px;top:124px;" width="12" height="10" viewBox="0 0 12 10"><path d="M2 7.8 L6 3.8 L10 7.8" fill="none" stroke="#5a5a5a" stroke-width="2.2"/></svg>
<div class="r" style="left:512px;top:138px;width:17px;height:322px;background:#737373;"></div>
<svg class="r" style="left:514px;top:1031px;" width="12" height="10" viewBox="0 0 12 10"><path d="M2 2.5 L6 6.5 L10 2.5" fill="none" stroke="#5a5a5a" stroke-width="2.2"/></svg>
<div class="r" style="left:188px;top:1045px;width:341px;height:1px;background:#3b3b3b;"></div>
<svg class="r" style="left:192px;top:1051px;" width="14" height="14" viewBox="0 0 14 14"><rect x="1.3" y="0.8" width="3.4" height="12.6" fill="#2e5530"/><rect x="8.6" y="0.8" width="3.4" height="12.6" fill="#2e5530"/></svg>
<svg class="r" style="left:218px;top:1051px;" width="13" height="14" viewBox="0 0 13 14"><path d="M1 1 L11.3 7 L1 13 Z" fill="#6e2a2a"/></svg>
<svg class="r" style="left:240px;top:1051px;" width="14" height="14" viewBox="0 0 14 14"><rect x="1.3" y="0.8" width="3.4" height="12.6" fill="#6b6128"/><rect x="8.6" y="0.8" width="3.4" height="12.6" fill="#6b6128"/></svg>
<svg class="r" style="left:276.8px;top:1048.4px;" width="20" height="22" viewBox="0 0 20 22"><g transform="scale(0.915)"><path d="M1 0 H11.3 V20.2 H8.2 C8.2 22.6 3.2 22.6 3.2 20.2 H1 C0.4 20.2 0 19.8 0 19.2 V1 C0 0.4 0.4 0 1 0 Z" fill="#2a4a7e"/><path d="M11.3 0 H18.9 C19.5 0 19.9 0.4 19.9 1 V19.2 C19.9 19.8 19.5 20.2 18.9 20.2 H11.3 Z" fill="#5a5a5a"/><path d="M11.8 8.9 H10.4 L9.6 7.2 H8 V13.8 H9.6 L10.4 12.1 H11.8 Z" fill="#5a5a5a" stroke="#1a1a1a" stroke-width="0.55"/></g></svg>
<svg class="r" style="left:300px;top:1047px;" width="22" height="22" viewBox="0 0 22 22"><rect width="22" height="22" fill="#5a5128"/><text x="20.5" y="20" text-anchor="end" font-family="Liberation Sans" font-size="12" fill="#1a1a1a">JS</text></svg>
<svg class="r" style="left:324px;top:1047px;" width="22" height="22" viewBox="0 0 22 22"><rect width="22" height="22" fill="#0d3858"/><text x="20.5" y="20" text-anchor="end" font-family="Liberation Sans" font-weight="bold" font-size="12" fill="#6a6a6a">TS</text></svg>
<svg class="r" style="left:348px;top:1047px;" width="22" height="22" viewBox="0 0 22 22"><rect width="22" height="22" fill="#0e1830"/><text x="11" y="13" text-anchor="middle" font-family="Liberation Sans" font-weight="bold" font-size="5" fill="#555">RULES</text></svg>
<svg class="r" style="left:484px;top:1049px;" width="16" height="20" viewBox="0 0 16 20"><path d="M4 6.5 L8 2.5 L12 6.5" fill="none" stroke="#fff" stroke-width="2"/><path d="M4 13.5 L8 17.5 L12 13.5" fill="none" stroke="#fff" stroke-width="2"/></svg>
<svg class="r" style="left:508px;top:1049px;" width="16" height="20" viewBox="0 0 16 20"><path d="M4 2.5 L8 6.5 L12 2.5" fill="none" stroke="#fff" stroke-width="2"/><path d="M4 15.5 L8 11.5 L12 15.5" fill="none" stroke="#fff" stroke-width="2"/></svg>
<div class="r" style="left:529px;top:72px;width:8px;height:1000px;background:#1e1e1e;"></div>
<div class="r" style="left:531px;top:560px;width:4px;height:24px;background:#4a4a5e;border-radius:2px;"></div>
<svg class="r" style="left:537px;top:78px;" width="23" height="33" viewBox="0 0 23 33"><path d="M0 0 H18 A5 5 0 0 1 23 5 V28 A5 5 0 0 1 18 33 H0 Z" fill="#436a93"/><path d="M17.5 16.5 H6.5 M11.5 11 L6 16.5 L11.5 22" fill="none" stroke="#4dabf5" stroke-width="1.8"/></svg>
<svg class="r" style="left:564px;top:84.2px;" width="21" height="24" viewBox="0 0 21 24"><path d="M1 0 H11.3 V20.2 H8.2 C8.2 22.6 3.2 22.6 3.2 20.2 H1 C0.4 20.2 0 19.8 0 19.2 V1 C0 0.4 0.4 0 1 0 Z" fill="#4285f4"/><path d="M11.3 0 H18.9 C19.5 0 19.9 0.4 19.9 1 V19.2 C19.9 19.8 19.5 20.2 18.9 20.2 H11.3 Z" fill="#dcdcdc"/><path d="M11.8 8.9 H10.4 L9.6 7.2 H8 V13.8 H9.6 L10.4 12.1 H11.8 Z" fill="#dcdcdc" stroke="#1a1a1a" stroke-width="0.55"/></svg>
<div class="t" style="left:588.5px;top:89.52px;font-size:12.5px;line-height:12.5px;color:#4dabf5;">POOL</div>
<svg class="r" style="left:632px;top:88px;" width="16" height="16" viewBox="0 0 16 16"><path d="M3 3 L13 13 M13 3 L3 13" stroke="#fff" stroke-width="1.6"/></svg>
<div class="r" style="left:547px;top:118px;width:123px;height:2px;background:#4dabf5;"></div>
<div class="r" style="left:537px;top:128px;width:1374px;height:38px;background:#1f1f1f;"></div>
<svg class="r" style="left:569px;top:135px;" width="24" height="24" viewBox="0 0 24 24"><circle cx="12" cy="12" r="8.2" fill="none" stroke="#fff" stroke-width="2"/><circle cx="12" cy="12" r="3.6" fill="#fff"/><path d="M12 1 V4 M12 20 V23 M1 12 H4 M20 12 H23" stroke="#fff" stroke-width="2"/></svg>
<svg class="r" style="left:606px;top:135px;" width="24" height="24" viewBox="0 0 24 24"><path d="M17.65 6.35A7.958 7.958 0 0 0 12 4c-4.42 0-7.99 3.58-7.99 8s3.57 8 7.99 8c3.73 0 6.84-2.55 7.73-6h-2.08A5.99 5.99 0 0 1 12 18c-3.31 0-6-2.69-6-6s2.69-6 6-6c1.66 0 3.14.69 4.22 1.78L13 11h7V4l-2.35 2.35z" fill="#fff"/></svg>
<svg class="r" style="left:646px;top:140px;" width="14" height="14" viewBox="0 0 14 14"><rect x="0.8" y="0" width="4" height="14" fill="#5cb85c"/><rect x="8.8" y="0" width="4" height="14" fill="#5cb85c"/></svg>
<svg class="r" style="left:1570px;top:139px;" width="24" height="16" viewBox="0 0 24 16"><path d="M8 2.5 L2.5 8 L8 13.5 M16 2.5 L21.5 8 L16 13.5" fill="none" stroke="#fff" stroke-width="2"/></svg>
<svg class="r" style="left:1605px;top:135px;" width="26" height="24" viewBox="0 0 26 24"><path d="M1 1 H10.5 L17 7.5 V22.6 H1 Z" fill="#fff"/><path d="M11.2 1 V7 H17" fill="none" stroke="#555" stroke-width="0.9"/><rect x="9" y="13.3" width="8" height="2.9" fill="#1f1f1f"/><rect x="17" y="13.3" width="3.3" height="2.9" fill="#fff"/><path d="M20 10 L25.2 14.75 L20 19.5 Z" fill="#fff"/></svg>
<svg class="r" style="left:1641px;top:134px;" width="26" height="26" viewBox="0 0 26 26"><path d="M6.8 0.8 H18.5 L25 7.3 V25 H6.8 Z" fill="#fff"/><path d="M19.2 0.8 V6.8 H25" fill="none" stroke="#555" stroke-width="0.9"/><rect x="1" y="14.4" width="5.8" height="3.1" fill="#fff"/><rect x="6.8" y="14.4" width="6.5" height="3.1" fill="#1f1f1f"/><path d="M13 11 L19 15.95 L13 20.9 Z" fill="#1f1f1f"/></svg>
<svg class="r" style="left:1678px;top:134px;" width="26" height="26" viewBox="0 0 26 26"><path d="M3.5 3 V23.5" stroke="#fff" stroke-width="2.6" stroke-linecap="round"/><circle cx="3.5" cy="2.5" r="2.3" fill="#fff"/><path d="M5 4.5 C8.5 2.5 11 6 15 4.5 C18 3.3 20 3.5 23.5 4.2 V17 C20 16.5 18 16 15 17.3 C11 19 8.5 15.5 5 17.5 Z" fill="#fff"/><rect x="6.2" y="6.4" width="3.0" height="3.1" fill="#1f1f1f"/><rect x="12.8" y="6.9" width="3.0" height="3.1" fill="#1f1f1f"/><rect x="19.4" y="6.4" width="3.0" height="3.1" fill="#1f1f1f"/><rect x="9.5" y="10.4" width="3.0" height="3.1" fill="#1f1f1f"/><rect x="16.099999999999998" y="10.4" width="3.0" height="3.1" fill="#1f1f1f"/><rect x="6.2" y="13.4" width="3.0" height="3.1" fill="#1f1f1f"/><rect x="12.8" y="13.9" width="3.0" height="3.1" fill="#1f1f1f"/><rect x="19.4" y="13.4" width="3.0" height="3.1" fill="#1f1f1f"/></svg>
<svg class="r" style="left:1714px;top:135px;" width="24" height="24" viewBox="0 0 24 24"><path d="M20 8.69V4h-4.69L12 .69 8.69 4H4v4.69L.69 12 4 15.31V20h4.69L12 23.31 15.31 20H20v-4.69L23.31 12 20 8.69zM12 18c-.89 0-1.74-.2-2.5-.55C11.56 16.5 13 14.42 13 12s-1.44-4.5-3.5-5.45C10.26 6.2 11.11 6 12 6c3.31 0 6 2.69 6 6s-2.69 6-6 6z" fill="#fff"/></svg>
<svg class="r" style="left:1751px;top:136px;" width="95" height="22" viewBox="0 0 95 22"><path d="M8 0 H72 L67 21 H8 V14 C5 16 1.5 14.5 1.5 10.5 C1.5 6.5 5 5 8 7 Z" fill="#5b80a5"/><path d="M72 0 H94 V21 H67 Z" fill="#f7df1e"/><path d="M70.5 0 L65.5 21" stroke="#111" stroke-width="2"/><text x="13" y="16" font-family="Liberation Sans" font-weight="bold" font-size="14" fill="#fff">Blockly</text><text x="73" y="16.5" font-family="Liberation Sans" font-weight="bold" font-size="14" fill="#111">JS</text></svg>
<svg class="r" style="left:1860px;top:135px;" width="24" height="24" viewBox="0 0 24 24"><path d="M22.7 19l-9.1-9.1c.9-2.3.4-5-1.5-6.9-2-2-5-2.4-7.4-1.3L9 6 6 9 1.6 4.7C.4 7.1.9 10.1 2.9 12.1c1.9 1.9 4.6 2.4 6.9 1.5l9.1 9.1c.4.4 1 .4 1.4 0l2.3-2.3c.5-.4.5-1.1.1-1.4z" fill="#fff"/></svg>
<div class="r" style="left:1911px;top:64px;width:9px;height:1016px;background:#121212;"></div>
<div class="r" style="left:537px;top:166px;width:180px;height:700px;background:#333333;"></div>
<div class="r" style="left:537px;top:170px;width:8px;height:22px;background:#5b80a5;"></div>
<div class="t" style="left:564px;top:175.76px;font-size:16px;line-height:16px;color:#fff;-webkit-text-stroke:0;">System</div>
<div class="r" style="left:537px;top:195px;width:8px;height:22px;background:#a55b80;"></div>
<div class="t" style="left:564px;top:200.76px;font-size:16px;line-height:16px;color:#fff;-webkit-text-stroke:0;">Aktionen</div>
<div class="r" style="left:537px;top:220px;width:8px;height:22px;background:#a55ba5;"></div>
<div class="t" style="left:564px;top:225.76px;font-size:16px;line-height:16px;color:#fff;-webkit-text-stroke:0;">Sendto</div>
<div class="r" style="left:537px;top:245px;width:8px;height:22px;background:#805ba5;"></div>
<div class="t" style="left:564px;top:250.76px;font-size:16px;line-height:16px;color:#fff;-webkit-text-stroke:0;">Datum und Zeit</div>
<div class="r" style="left:537px;top:270px;width:8px;height:22px;background:#995ba5;"></div>
<div class="t" style="left:564px;top:275.76px;font-size:16px;line-height:16px;color:#fff;-webkit-text-stroke:0;">Konvertierung</div>
<div class="r" style="left:537px;top:295px;width:8px;height:22px;background:#a55b80;"></div>
<div class="t" style="left:564px;top:300.76px;font-size:16px;line-height:16px;color:#fff;-webkit-text-stroke:0;">Trigger</div>
<div class="r" style="left:537px;top:320px;width:8px;height:22px;background:#a5a55b;"></div>
<div class="t" style="left:564px;top:325.76px;font-size:16px;line-height:16px;color:#fff;-webkit-text-stroke:0;">Timeouts</div>
<div class="r" style="left:537px;top:345px;width:8px;height:22px;background:#a58c5b;"></div>
<div class="t" style="left:564px;top:350.76px;font-size:16px;line-height:16px;color:#fff;-webkit-text-stroke:0;">Objekt</div>
<div class="r" style="left:537px;top:381px;width:8px;height:22px;background:#5b80a5;"></div>
<div class="t" style="left:564px;top:386.76px;font-size:16px;line-height:16px;color:#fff;-webkit-text-stroke:0;">Logik</div>
<div class="r" style="left:537px;top:406px;width:8px;height:22px;background:#5ba55b;"></div>
<div class="t" style="left:564px;top:411.76px;font-size:16px;line-height:16px;color:#fff;-webkit-text-stroke:0;">Schleifen</div>
<div class="r" style="left:537px;top:431px;width:8px;height:22px;background:#5b67a5;"></div>
<div class="t" style="left:564px;top:436.76px;font-size:16px;line-height:16px;color:#fff;-webkit-text-stroke:0;">Mathematik</div>
<div class="r" style="left:537px;top:456px;width:8px;height:22px;background:#5ba58c;"></div>
<div class="t" style="left:564px;top:461.76px;font-size:16px;line-height:16px;color:#fff;-webkit-text-stroke:0;">Text</div>
<div class="r" style="left:537px;top:481px;width:8px;height:22px;background:#745ba5;"></div>
<div class="t" style="left:564px;top:486.76px;font-size:16px;line-height:16px;color:#fff;-webkit-text-stroke:0;">Listen</div>
<div class="r" style="left:537px;top:506px;width:8px;height:22px;background:#a5745b;"></div>
<div class="t" style="left:564px;top:511.76px;font-size:16px;line-height:16px;color:#fff;-webkit-text-stroke:0;">Farbe</div>
<div class="r" style="left:537px;top:542px;width:8px;height:22px;background:#a55b80;"></div>
<div class="t" style="left:564px;top:547.76px;font-size:16px;line-height:16px;color:#fff;-webkit-text-stroke:0;">Variablen</div>
<div class="r" style="left:537px;top:567px;width:8px;height:22px;background:#995ba5;"></div>
<div class="t" style="left:564px;top:572.76px;font-size:16px;line-height:16px;color:#fff;-webkit-text-stroke:0;">Funktionen</div>
<div class="r" style="left:537px;top:375px;width:180px;height:1.5px;background:#d0d0d0;"></div>
<div class="r" style="left:537px;top:536px;width:180px;height:1.5px;background:#d0d0d0;"></div>
<div class="r" style="left:537px;top:867px;width:1374px;height:9px;background:#1f1f1f;"></div>
<div class="r" style="left:1212px;top:870px;width:24px;height:4px;background:#4a4a5e;border-radius:2px;"></div>
<div class="r" style="left:537px;top:866px;width:1374px;height:1px;background:#141414;"></div>
<div class="r" style="left:537px;top:876px;width:1374px;height:196px;background:#121212;"></div>
<div class="r" style="left:537px;top:876px;width:34px;height:196px;background:#151515;"></div>
<svg class="r" style="left:541px;top:879px;" width="24" height="24" viewBox="0 0 24 24"><path d="M12 3.5 V14" fill="none" stroke="#4a80b8" stroke-width="1.8"/><path d="M8.2 12 H15.8 L12 15.6 Z" fill="#4a80b8"/><path d="M4.5 19 H20.5" stroke="#4a80b8" stroke-width="1.8"/></svg>
<svg class="r" style="left:541px;top:912px;" width="24" height="24" viewBox="0 0 24 24"><circle cx="12" cy="12" r="11.9" fill="#a8a8a8"/><rect x="3" y="4.8" width="8" height="1.6" fill="#383838"/><rect x="3" y="8.8" width="8" height="1.6" fill="#383838"/><rect x="3" y="12.8" width="8" height="1.6" fill="#383838"/><rect x="3" y="16.8" width="8" height="1.6" fill="#383838"/><rect x="13" y="5" width="8" height="13.7" fill="#383838"/></svg>
<svg class="r" style="left:541px;top:943px;" width="24" height="24" viewBox="0 0 24 24"><path d="M12 7c2.76 0 5 2.24 5 5 0 .65-.13 1.26-.36 1.83l2.92 2.92c1.51-1.26 2.7-2.89 3.43-4.75-1.73-4.39-6-7.5-11-7.5-1.4 0-2.74.25-3.98.7l2.16 2.16C10.74 7.13 11.35 7 12 7zM2 4.27l2.28 2.28.46.46A11.804 11.804 0 0 0 1 12c1.73 4.39 6 7.5 11 7.5 1.55 0 3.03-.3 4.38-.84l.42.42L19.73 22 21 20.73 3.27 3 2 4.27zM7.53 9.8l1.55 1.55c-.05.21-.08.43-.08.65 0 1.66 1.34 3 3 3 .22 0 .44-.03.65-.08l1.55 1.55c-.67.33-1.41.53-2.2.53-2.76 0-5-2.24-5-5 0-.79.2-1.53.53-2.2zm4.31-.78l3.15 3.15.02-.16c0-1.66-1.34-3-3-3l-.17.01z" fill="#fff"/></svg>
<svg class="r" style="left:717px;top:166px;" width="1195" height="700" viewBox="0 0 1195 700"><defs><pattern id="dots" x="0" y="0" width="25" height="25" patternUnits="userSpaceOnUse"><rect x="3.9" y="2.9" width="1.2" height="1.2" fill="#a0a0a0"/></pattern></defs><g transform="translate(-717,-166)"><rect x="717" y="166" width="1194" height="700" fill="#1e1e1e"/><rect x="717" y="166" width="1194" height="700" fill="url(#dots)"/><rect x="717" y="166" width="1194" height="1" fill="#8a8a8a"/><rect x="1911" y="166" width="1" height="700" fill="#8a8a8a"/><rect x="717" y="865" width="1194" height="1" fill="#8a8a8a"/><path d="M779.5 236.5 A8 8 0 0 1 787.5 228.5 H794.5 l6 4 h3 l6 -4 H971.5 V308.5 H829.5 l-6 4 h-3 l-6 -4 H800.5 V476.5 H971.5 V487.5 H810 l-6 4 h-3 l-6 -4 H787.5 A8 8 0 0 1 779.5 479.5 Z" fill="#a55b80"/><rect x="790.0999999999999" y="234.3" width="15.4" height="15.4" rx="3" fill="#3a20d0" stroke="#d2a8d2" stroke-width="0.7"/><rect x="796.5" y="236.9" width="2.6" height="2.6" fill="#ead4dc" transform="rotate(0 797.8 242)"/><rect x="796.5" y="236.9" width="2.6" height="2.6" fill="#ead4dc" transform="rotate(60 797.8 242)"/><rect x="796.5" y="236.9" width="2.6" height="2.6" fill="#ead4dc" transform="rotate(120 797.8 242)"/><rect x="796.5" y="236.9" width="2.6" height="2.6" fill="#ead4dc" transform="rotate(180 797.8 242)"/><rect x="796.5" y="236.9" width="2.6" height="2.6" fill="#ead4dc" transform="rotate(240 797.8 242)"/><rect x="796.5" y="236.9" width="2.6" height="2.6" fill="#ead4dc" transform="rotate(300 797.8 242)"/><circle cx="797.8" cy="242" r="3.9" fill="#ead4dc"/><circle cx="797.8" cy="242" r="1.9" fill="#3a20d0"/><text x="817.5" y="247.5" font-family="Liberation Sans" font-size="14.67" fill="#fff">Falls Objekte</text><rect x="785" y="261" width="128" height="17" rx="4" fill="#dcbfcd"/><text x="790" y="274.6" font-family="Liberation Sans" font-size="14.67" fill="#000">wurde geändert</text><path d="M899.3 269.3 h6 l-3 4 z" fill="#a55b80"/><text x="790" y="301.7" font-family="Liberation Sans" font-size="14.67" fill="#fff">Auslösung durch</text><rect x="904" y="288" width="54" height="17" rx="4" fill="#dcbfcd"/><text x="909.4" y="301.7" font-family="Liberation Sans" font-size="14.67" fill="#000">egal</text><path d="M944 296.4 h6 l-3 4 z" fill="#a55b80"/><rect x="971.5" y="229" width="137" height="27" fill="#bfdbd0"/><path d="M971.5 234 c0 10 -8 -8 -8 7.5 s8 -2.5 8 7.5 z" fill="#bfdbd0"/><text x="981.9" y="247.8" font-family="Liberation Sans" font-size="14.67" fill="#fff">Objekt ID</text><rect x="1047.3" y="234" width="55.700000000000045" height="17" rx="4" fill="#e4f0eb"/><text x="1052.7" y="247.8" font-family="Liberation Sans" font-size="14.67" fill="#000">Pumpe</text><rect x="799" y="308" width="10" height="10" fill="#a55b80"/><path d="M799.5 316.5 A8 8 0 0 1 807.5 308.5 H814.5 l6 4 h3 l6 -4 H894 V344.5 H893.5 l-6 4 h-3 l-6 -4 H863.5 V385.5 H894 V421.5 H893.5 l-6 4 h-3 l-6 -4 H863.5 V463.5 H894 V473.5 H830 l-6 4 h-3 l-6 -4 H807.5 A8 8 0 0 1 799.5 465.5 Z" fill="#5b80a5"/><rect x="810.0999999999999" y="319.1" width="15.4" height="15.4" rx="3" fill="#3a20d0" stroke="#d2a8d2" stroke-width="0.7"/><rect x="816.5" y="321.7" width="2.6" height="2.6" fill="#ead4dc" transform="rotate(0 817.8 326.8)"/><rect x="816.5" y="321.7" width="2.6" height="2.6" fill="#ead4dc" transform="rotate(60 817.8 326.8)"/><rect x="816.5" y="321.7" width="2.6" height="2.6" fill="#ead4dc" transform="rotate(120 817.8 326.8)"/><rect x="816.5" y="321.7" width="2.6" height="2.6" fill="#ead4dc" transform="rotate(180 817.8 326.8)"/><rect x="816.5" y="321.7" width="2.6" height="2.6" fill="#ead4dc" transform="rotate(240 817.8 326.8)"/><rect x="816.5" y="321.7" width="2.6" height="2.6" fill="#ead4dc" transform="rotate(300 817.8 326.8)"/><circle cx="817.8" cy="326.8" r="3.9" fill="#ead4dc"/><circle cx="817.8" cy="326.8" r="1.9" fill="#3a20d0"/><text x="837.4" y="332.8" font-family="Liberation Sans" font-size="14.67" fill="#fff">falls</text><text x="810.6" y="363.5" font-family="Liberation Sans" font-size="14.67" fill="#fff">mache</text><text x="810.2" y="409.7" font-family="Liberation Sans" font-size="14.67" fill="#fff">sonst falls</text><text x="810.6" y="440.5" font-family="Liberation Sans" font-size="14.67" fill="#fff">mache</text><rect x="894" y="308.5" width="372" height="36.0" fill="#5b80a5"/><path d="M894 314.5 c0 10 -8 -8 -8 7.5 s8 -2.5 8 7.5 z" fill="#5b80a5"/><path d="M894 314.5 c0 10 -8 -8 -8 7.5 s8 -2.5 8 7.5" fill="none" stroke="#87a3c2" stroke-width="1"/><rect x="894" y="314.5" width="1.5" height="16" fill="#5b80a5"/><path d="M894.5 308.5 V314.5 M894.5 329.5 V344.5 H1266" fill="none" stroke="#87a3c2" stroke-width="1" stroke-opacity="0.8"/><rect x="909.8" y="313.0" width="226.60000000000014" height="28.69999999999999" fill="#5b80a5" stroke="#87a3c2" stroke-width="1"/><path d="M909.8 318.5 c0 10 -8 -8 -8 7.5 s8 -2.5 8 7.5 z" fill="#5b80a5"/><path d="M909.8 318.5 c0 10 -8 -8 -8 7.5 s8 -2.5 8 7.5" fill="none" stroke="#87a3c2" stroke-width="1"/><rect x="910.4" y="318.5" width="1.5" height="16" fill="#5b80a5"/><rect x="915" y="319.3" width="56.799999999999955" height="16.69999999999999" rx="4" fill="#bdccdb"/><text x="920.2" y="332.8" font-family="Liberation Sans" font-size="14.67" fill="#000">Wert</text><path d="M958 327.5 h6 l-3 4 z" fill="#5b80a5"/><text x="977.5" y="332.8" font-family="Liberation Sans" font-size="14.67" fill="#fff">vom Objekt ID</text><rect x="1075" y="319.3" width="56" height="16.69999999999999" rx="4" fill="#bdccdb"/><text x="1080.4" y="332.8" font-family="Liberation Sans" font-size="14.67" fill="#000">Pumpe</text><rect x="1141.3" y="319.3" width="34.700000000000045" height="16.69999999999999" rx="4" fill="#bdccdb"/><text x="1146.8" y="332.8" font-family="Liberation Sans" font-size="14.67" fill="#000">=</text><path d="M1162.3 327.5 h6 l-3 4 z" fill="#5b80a5"/><rect x="1187" y="313.0" width="69.40000000000009" height="28.69999999999999" fill="#5b80a5" stroke="#87a3c2" stroke-width="1"/><path d="M1187 318.5 c0 10 -8 -8 -8 7.5 s8 -2.5 8 7.5 z" fill="#5b80a5"/><path d="M1187 318.5 c0 10 -8 -8 -8 7.5 s8 -2.5 8 7.5" fill="none" stroke="#87a3c2" stroke-width="1"/><rect x="1187.6" y="318.5" width="1.5" height="16" fill="#5b80a5"/><rect x="1192.3" y="319.3" width="58.80000000000018" height="16.69999999999999" rx="4" fill="#bdccdb"/><text x="1198.2" y="332.8" font-family="Liberation Sans" font-size="14.67" fill="#000">wahr</text><path d="M1236.5 327.5 h6 l-3 4 z" fill="#5b80a5"/><rect x="894" y="385.5" width="378.79999999999995" height="37.5" fill="#5b80a5"/><path d="M894 391.5 c0 10 -8 -8 -8 7.5 s8 -2.5 8 7.5 z" fill="#5b80a5"/><path d="M894 391.5 c0 10 -8 -8 -8 7.5 s8 -2.5 8 7.5" fill="none" stroke="#87a3c2" stroke-width="1"/><rect x="894" y="391.5" width="1.5" height="16" fill="#5b80a5"/><path d="M894.5 385.5 V391.5 M894.5 406.5 V423 H1272.8" fill="none" stroke="#87a3c2" stroke-width="1" stroke-opacity="0.8"/><rect x="909.8" y="390.0" width="226.60000000000014" height="30.5" fill="#5b80a5" stroke="#87a3c2" stroke-width="1"/><path d="M909.8 395.5 c0 10 -8 -8 -8 7.5 s8 -2.5 8 7.5 z" fill="#5b80a5"/><path d="M909.8 395.5 c0 10 -8 -8 -8 7.5 s8 -2.5 8 7.5" fill="none" stroke="#87a3c2" stroke-width="1"/><rect x="910.4" y="395.5" width="1.5" height="16" fill="#5b80a5"/><rect x="915" y="396.2" width="56.799999999999955" height="16.69999999999999" rx="4" fill="#bdccdb"/><text x="920.2" y="409.7" font-family="Liberation Sans" font-size="14.67" fill="#000">Wert</text><path d="M958 404.4 h6 l-3 4 z" fill="#5b80a5"/><text x="977.5" y="409.7" font-family="Liberation Sans" font-size="14.67" fill="#fff">vom Objekt ID</text><rect x="1075" y="396.2" width="56" height="16.69999999999999" rx="4" fill="#bdccdb"/><text x="1080.4" y="409.7" font-family="Liberation Sans" font-size="14.67" fill="#000">Pumpe</text><rect x="1141.3" y="396.2" width="34.700000000000045" height="16.69999999999999" rx="4" fill="#bdccdb"/><text x="1146.8" y="409.7" font-family="Liberation Sans" font-size="14.67" fill="#000">=</text><path d="M1162.3 404.4 h6 l-3 4 z" fill="#5b80a5"/><rect x="1187" y="390.0" width="75.70000000000005" height="30.5" fill="#5b80a5" stroke="#87a3c2" stroke-width="1"/><path d="M1187 395.5 c0 10 -8 -8 -8 7.5 s8 -2.5 8 7.5 z" fill="#5b80a5"/><path d="M1187 395.5 c0 10 -8 -8 -8 7.5 s8 -2.5 8 7.5" fill="none" stroke="#87a3c2" stroke-width="1"/><rect x="1187.6" y="395.5" width="1.5" height="16" fill="#5b80a5"/><rect x="1192.3" y="396.2" width="65.10000000000014" height="16.69999999999999" rx="4" fill="#bdccdb"/><text x="1198" y="409.7" font-family="Liberation Sans" font-size="14.67" fill="#000">falsch</text><path d="M1243 404.4 h6 l-3 4 z" fill="#5b80a5"/><rect x="863" y="344.2" width="10" height="10" fill="#5b80a5"/><rect x="876" y="344.2" width="20" height="7" fill="#5b80a5"/><path d="M863.5 373 V385.5 H1283.75 V373 Z" fill="#1b1b1b"/><path d="M863.5 352.7 A8 8 0 0 1 871.5 344.7 H878 l6 4.5 h3.5 l6 -4.5 H1283.75 V381 H894 l-6 4.5 h-3.5 l-6 -4.5 H871.5 A8 8 0 0 1 863.5 373 Z" fill="#5b80a5" stroke="#87a3c2" stroke-width="1"/><text x="874.2" y="368.75" font-family="Liberation Sans" font-size="14.67" fill="#fff">steuere</text><rect x="928" y="355.25" width="121" height="16.69999999999999" rx="4" fill="#bdccdb"/><text x="932.9" y="368.75" font-family="Liberation Sans" font-size="14.67" fill="#000">Aktuelle Leistung</text><text x="1054.3" y="368.75" font-family="Liberation Sans" font-size="14.67" fill="#fff">mit</text><rect x="1089.9" y="349.5" width="52.69999999999982" height="28" fill="#5b67a5" stroke="#7880b5" stroke-width="1"/><path d="M1089.9 354.7 c0 10 -8 -8 -8 7.5 s8 -2.5 8 7.5 z" fill="#5b67a5"/><path d="M1089.9 354.7 c0 10 -8 -8 -8 7.5 s8 -2.5 8 7.5" fill="none" stroke="#7880b5" stroke-width="1"/><rect x="1090.5" y="354.7" width="1.5" height="16" fill="#5b67a5"/><rect x="1094.7" y="355.25" width="42.299999999999955" height="16.69999999999999" rx="4" fill="#bdc2db"/><text x="1100.5" y="368.75" font-family="Liberation Sans" font-size="14.67" fill="#000">1000</text><text x="1152.6" y="368.75" font-family="Liberation Sans" font-size="14.67" fill="#fff">mit Verzögerung</text><rect x="1264" y="355.25" width="14.5" height="16.69999999999999" rx="4" fill="#bdccdb"/><rect x="863" y="421.2" width="10" height="10" fill="#5b80a5"/><rect x="876" y="421.2" width="20" height="7" fill="#5b80a5"/><path d="M863.5 451 V463.5 H1260 V451 Z" fill="#1b1b1b"/><path d="M863.5 429.7 A8 8 0 0 1 871.5 421.7 H878 l6 4.5 h3.5 l6 -4.5 H1260 V459 H894 l-6 4.5 h-3.5 l-6 -4.5 H871.5 A8 8 0 0 1 863.5 451 Z" fill="#5b80a5" stroke="#87a3c2" stroke-width="1"/><text x="874.2" y="445.75" font-family="Liberation Sans" font-size="14.67" fill="#fff">steuere</text><rect x="928" y="432.25" width="121" height="16.69999999999999" rx="4" fill="#bdccdb"/><text x="932.9" y="445.75" font-family="Liberation Sans" font-size="14.67" fill="#000">Aktuelle Leistung</text><text x="1054.3" y="445.75" font-family="Liberation Sans" font-size="14.67" fill="#fff">mit</text><rect x="1089.9" y="426.5" width="28.09999999999991" height="28" fill="#5b67a5" stroke="#7880b5" stroke-width="1"/><path d="M1089.9 431.7 c0 10 -8 -8 -8 7.5 s8 -2.5 8 7.5 z" fill="#5b67a5"/><path d="M1089.9 431.7 c0 10 -8 -8 -8 7.5 s8 -2.5 8 7.5" fill="none" stroke="#7880b5" stroke-width="1"/><rect x="1090.5" y="431.7" width="1.5" height="16" fill="#5b67a5"/><rect x="1094.7" y="432.25" width="18.299999999999955" height="16.69999999999999" rx="4" fill="#bdc2db"/><text x="1099.9" y="445.75" font-family="Liberation Sans" font-size="14.67" fill="#000">0</text><text x="1127.9" y="445.75" font-family="Liberation Sans" font-size="14.67" fill="#fff">mit Verzögerung</text><rect x="1239" y="432.25" width="14.5" height="16.69999999999999" rx="4" fill="#bdccdb"/><g stroke="#555" fill="none" stroke-width="1.8"><circle cx="1861" cy="657.8" r="12"/><path d="M1861 642 V647 M1861 668.5 V673.5 M1845 657.8 H1850 M1872 657.8 H1877"/><circle cx="1861" cy="700.8" r="15.5"/><path d="M1853 700.8 H1869 M1861 692.8 V708.8"/><circle cx="1861" cy="734.7" r="15.5"/><path d="M1853 734.7 H1869"/></g><circle cx="1861" cy="657.8" r="4.2" fill="#555"/><path d="M1832 777.5 H1844 C1845 776 1846 775 1848 775 H1858 C1860 775 1861 776 1862 777.5 H1874 V785.5 H1832 Z" fill="#4d4d4d"/><path d="M1835 789 H1871 V826.5 C1871 829 1869 830.5 1867 830.5 H1839 C1837 830.5 1835 829 1835 826.5 Z" fill="#4d4d4d"/><rect x="1899" y="392" width="10" height="420.5" rx="5" fill="#474747"/><rect x="1111" y="853.3" width="746" height="10" rx="5" fill="#474747"/></g></svg>
</div></body></html>
